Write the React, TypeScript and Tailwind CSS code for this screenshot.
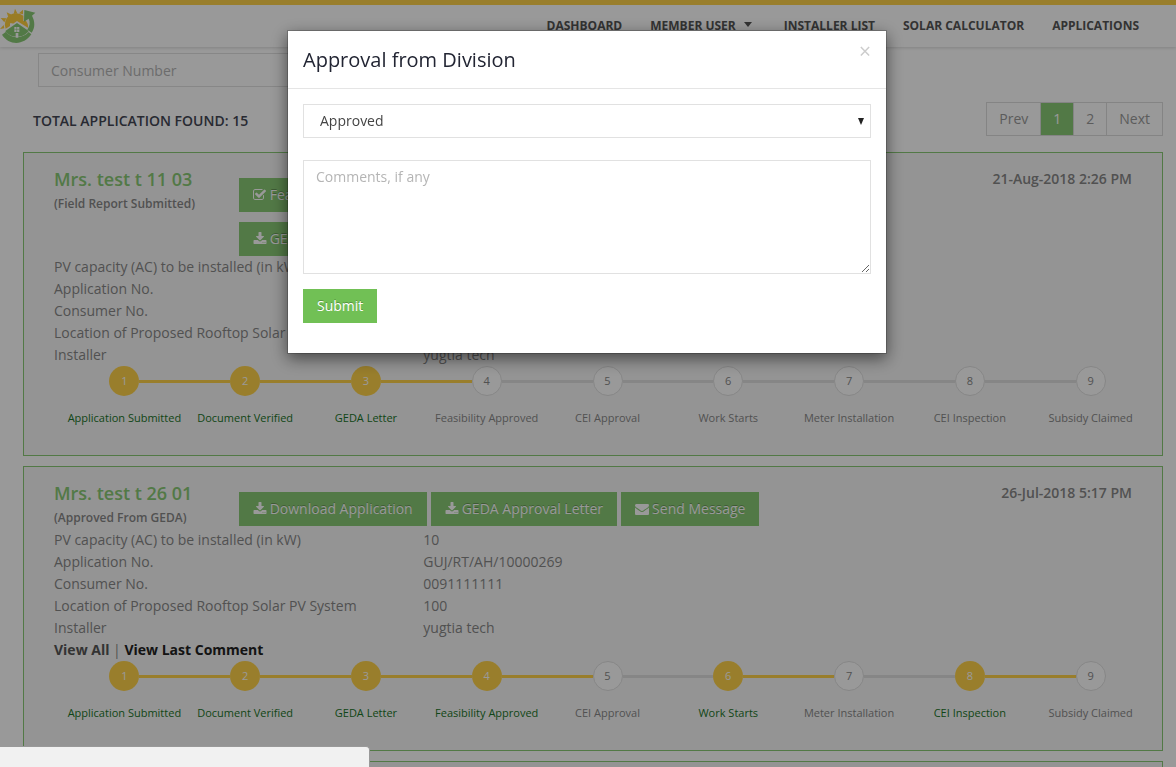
import React from "react";

type IconName = "check" | "download" | "mail";

type Application = {
  name: string;
  status: string;
  date: string;
  actions: { icon: IconName; label: string }[][];
  values: string[];
  comments?: boolean;
  done: number[];
};

const FIELDS = [
  "PV capacity (AC) to be installed (in kW)",
  "Application No.",
  "Consumer No.",
  "Location of Proposed Rooftop Solar PV System",
  "Installer",
];

const STEPS = [
  "Application Submitted",
  "Document Verified",
  "GEDA Letter",
  "Feasibility Approved",
  "CEI Approval",
  "Work Starts",
  "Meter Installation",
  "CEI Inspection",
  "Subsidy Claimed",
];

const APPLICATIONS: Application[] = [
  {
    name: "Mrs. test t 11 03",
    status: "(Field Report Submitted)",
    date: "21-Aug-2018 2:26 PM",
    actions: [
      [{ icon: "check", label: "Feasibility" }],
      [{ icon: "download", label: "GEDA Approval Letter" }],
    ],
    values: ["", "", "", "", "yugtia tech"],
    done: [1, 2, 3],
  },
  {
    name: "Mrs. test t 26 01",
    status: "(Approved From GEDA)",
    date: "26-Jul-2018 5:17 PM",
    actions: [
      [
        { icon: "download", label: "Download Application" },
        { icon: "download", label: "GEDA Approval Letter" },
        { icon: "mail", label: "Send Message" },
      ],
    ],
    values: ["10", "GUJ/RT/AH/10000269", "0091111111", "100", "yugtia tech"],
    comments: true,
    done: [1, 2, 3, 4, 6, 8],
  },
];

const ICON_PATHS: Record<IconName, string> = {
  check:
    "M1408 930v318q0 119-84.5 203.5t-203.5 84.5h-832q-119 0-203.5-84.5t-84.5-203.5v-832q0-119 84.5-203.5t203.5-84.5h832q63 0 117 25 15 7 18 23 3 17-9 29l-49 49q-10 10-23 10-3 0-9-2-23-6-45-6h-832q-66 0-113 47t-47 113v832q0 66 47 113t113 47h832q66 0 113-47t47-113v-254q0-13 9-22l64-64q10-10 23-10 6 0 12 3 20 8 20 29zm231-489l-814 814q-24 24-57 24t-57-24l-430-430q-24-24-24-57t24-57l110-110q24-24 57-24t57 24l263 263 647-647q24-24 57-24t57 24l110 110q24 24 24 57t-24 57z",
  download:
    "M1344 1344q0-26-19-45t-45-19-45 19-19 45 19 45 45 19 45-19 19-45zm256 0q0-26-19-45t-45-19-45 19-19 45 19 45 45 19 45-19 19-45zm128-224v320q0 40-28 68t-68 28h-1472q-40 0-68-28t-28-68v-320q0-40 28-68t68-28h465l135 136q58 56 136 56t136-56l136-136h464q40 0 68 28t28 68zm-325-569q17 41-14 70l-448 448q-18 19-45 19t-45-19l-448-448q-31-29-14-70 17-39 59-39h256v-448q0-26 19-45t45-19h256q26 0 45 19t19 45v448h256q42 0 59 39z",
  mail:
    "M1792 710v794q0 66-47 113t-113 47h-1472q-66 0-113-47t-47-113v-794q44 49 101 87 362 246 497 345 57 42 92.5 65.5t94.5 48 110 24.5h2q51 0 110-24.5t94.5-48 92.5-65.5q170-123 498-345 57-39 100-87zm0-294q0 79-49 151t-122 123q-376 261-468 325-10 7-42.5 31t-54 38.5-52 32.5-57.5 27-50 9h-2q-23 0-50-9t-57.5-27-52-32.5-54-38.5-42.5-31q-91-64-262-182.5t-205-142.5q-62-42-117-115.5t-55-136.5q0-78 41.5-130t118.5-52h1472q65 0 112.5 47t47.5 113z",
};

function Icon({ name }: { name: IconName }) {
  return (
    <svg viewBox="0 0 1792 1792" className="size-[14px] fill-current" aria-hidden="true">
      <path d={ICON_PATHS[name]} />
    </svg>
  );
}

function Logo() {
  return (
    <svg viewBox="0 24 108 108" className="size-9" role="img" aria-label="Solar rooftop">
      <g fill="#ffcf3f">
        <path d="M17 86a34 34 0 0 1 53-39v16l8-1q7 9 7 22L51 63 38 72v-2h-8v8z" />
        <path d="M0 87l11-12 2 10zM2 54l17 1-6 12zM20 37l15 7-10 8zM41 42l4-16 7 14zM57 40l12-11v14z" />
      </g>
      <g fill="#89ca75">
        <path d="M73 30l33 8-10 9c9 17 10 36-1 51l-13-9c8-11 9-23 4-33l-14 9z" />
        <path d="M51 69l35 24c-9 12-20 17-35 17s-27-5-35-17z" />
        <path d="M18 95c13 20 50 23 68 1l8 7C71 137 27 137 6 104z" />
      </g>
      <path d="M43 81h15v15H43zM47 99h8v14h-8z" fill="#fff" />
      <path d="M50 81v15M43 88h15" stroke="#89ca75" strokeWidth="1.5" />
    </svg>
  );
}

function Header() {
  const link = "flex items-center text-[#555]";
  return (
    <header className="flex h-[47px] items-center justify-between border-t-5 border-[#ffd34a] bg-white pr-[37px] shadow-[0_1px_3px_rgba(0,0,0,0.15)]">
      <a href="#home">
        <Logo />
      </a>
      <nav className="flex gap-7 text-xs font-bold">
        <a href="#dashboard" className={link}>DASHBOARD</a>
        <a href="#member" className={link}>
          MEMBER USER
          <svg viewBox="0 0 8 5" className="mr-1 mb-1 ml-2 h-[5px] w-2 fill-current" aria-hidden="true">
            <path d="M0 0h8L4 5z" />
          </svg>
        </a>
        <a href="#installers" className={link}>INSTALLER LIST</a>
        <a href="#calculator" className={link}>SOLAR CALCULATOR</a>
        <a href="#applications" className={link}>APPLICATIONS</a>
      </nav>
    </header>
  );
}

function Pagination() {
  const item = "h-[34px] border-y border-r border-[#ddd] px-3";
  return (
    <nav aria-label="Pages" className="flex text-[#999]">
      <button className={item + " border-l"}>Prev</button>
      <button aria-current="page" className="h-[34px] border-y border-r border-[#ddd] bg-[#89ca75] px-3 text-white">1</button>
      <button className={item}>2</button>
      <button className={item}>Next</button>
    </nav>
  );
}

function Progress({ done }: { done: number[] }) {
  const isDone = (n: number) => done.includes(n);
  const line = (n: number) =>
    n < 1 || n >= STEPS.length ? "bg-transparent" : isDone(n) ? "bg-[#ffd34a]" : "bg-[#e0e0e0]";
  return (
    <ol className="grid grid-cols-9 pr-[11px] pl-10 text-[11px]">
      {STEPS.map((label, i) => {
        const n = i + 1;
        return (
          <li key={label} className="flex flex-col gap-[13px]">
            <div className="flex items-center">
              <span className={"h-[3px] flex-1 " + line(n - 1)} />
              <span
                className={
                  "flex size-[30px] items-center justify-center rounded-full " +
                  (isDone(n) ? "bg-[#ffd34a] text-white" : "border border-[#e0e0e0] bg-white text-[#888]")
                }
              >
                {n}
              </span>
              <span className={"h-[3px] flex-1 " + line(n)} />
            </div>
            <span className={"text-center leading-[17px] whitespace-nowrap " + (isDone(n) ? "text-[#1a7528]" : "text-[#888]")}>
              {label}
            </span>
          </li>
        );
      })}
    </ol>
  );
}

function Card({ app }: { app: Application }) {
  return (
    <article className="border border-[#89ca75] bg-[#f7f7f7] pt-[15px] pb-[29px]">
      <div className="grid grid-cols-12 px-[15px]">
        <div className="col-span-2 flex flex-col gap-[2px] px-[15px] whitespace-nowrap">
          <h2 className="text-lg leading-[23px] font-semibold text-[#89ca75]">{app.name}</h2>
          <p className="text-xs leading-[22px] font-semibold text-[#888]">{app.status}</p>
        </div>
        <div className="col-span-8 flex h-fit flex-col gap-[10px] px-[15px] pt-[10px]">
          {app.actions.map((row, i) => (
            <div key={i} className="flex h-[34px] gap-1">
              {row.map(({ icon, label }) => (
                <button
                  key={label}
                  className="flex items-center gap-[3px] bg-[#89ca75] px-[14px] whitespace-nowrap text-white text-shadow-[0_-1px_0_rgba(0,0,0,0.25)]"
                >
                  <Icon name={icon} />
                  {label}
                </button>
              ))}
            </div>
          ))}
        </div>
        <time className="col-span-2 flex justify-end px-[15px] leading-[22px] font-semibold whitespace-nowrap text-[#888]">
          {app.date}
        </time>
      </div>
      <dl className="px-[15px] leading-[22px]">
        {FIELDS.map((field, i) => (
          <div key={field} className="grid grid-cols-12">
            <dt className="col-span-4 px-[15px] whitespace-nowrap">{field}</dt>
            <dd className="col-span-8 px-[15px]">{app.values[i]}</dd>
          </div>
        ))}
      </dl>
      {app.comments && (
        <p className="px-[30px] leading-[22px]">
          <a href="#comments" className="font-bold text-[#555]">View All</a>
          {" | "}
          <a href="#last-comment" className="font-bold text-[#222]">View Last Comment</a>
        </p>
      )}
      <Progress done={app.done} />
    </article>
  );
}

function ApprovalDialog() {
  return (
    <div className="fixed inset-0 flex items-start justify-center bg-black/40 pt-[30px] pr-[2px]">
      <div
        role="dialog"
        aria-modal="true"
        aria-labelledby="dialog-title"
        className="w-[600px] border border-black/20 bg-white bg-clip-padding shadow-[0_5px_15px_rgba(0,0,0,0.5)]"
      >
        <div className="flex items-start justify-between border-b border-[#e5e5e5] p-[15px]">
          <h1 id="dialog-title" className="text-xl leading-[27px] text-[#222533]">Approval from Division</h1>
          <button aria-label="Close" className="text-[21px] leading-[10px] text-[#ccc]">×</button>
        </div>
        <form className="flex flex-col items-start p-[15px] pb-[30px]" onSubmit={(e) => e.preventDefault()}>
          <div className="relative mb-[22px] w-full">
            <select
              aria-label="Decision"
              className="block h-[34px] w-full appearance-none rounded-none border border-[#e1e1e1] bg-white px-4 text-[#444]"
            >
              <option>Approved</option>
              <option>Rejected</option>
            </select>
            <svg viewBox="0 0 6 7" className="pointer-events-none absolute top-[14px] right-[7px] h-[7px] w-[6px] fill-[#222]">
              <path d="M0 0h6L3 7z" />
            </svg>
          </div>
          <textarea
            aria-label="Comments"
            placeholder="Comments, if any"
            className="mb-[15px] block h-[114px] w-full border border-[#e1e1e1] px-3 py-[6px] leading-5 placeholder:text-[#b5b5b5]"
          />
          <button type="submit" className="h-[34px] bg-[#71c055] px-[14px] text-white text-shadow-[0_-1px_0_rgba(0,0,0,0.25)]">
            Submit
          </button>
        </form>
      </div>
    </div>
  );
}

export default function App() {
  return (
    <div className="h-screen overflow-hidden bg-white font-['Open_Sans',sans-serif] text-sm text-[#888]">
      <Header />
      <main className="pr-[13px] pl-[23px]">
        <div className="px-[15px] pt-[6px]">
          <input
            aria-label="Consumer Number"
            placeholder="Consumer Number"
            className="block h-[34px] w-1/3 border border-[#e1e1e1] px-3 placeholder:text-[#b5b5b5]"
          />
        </div>
        <div className="flex items-center justify-between pt-[15px] pb-4 pl-[10px]">
          <h3 className="pt-1 font-semibold text-[#444754]">TOTAL APPLICATION FOUND: 15</h3>
          <Pagination />
        </div>
        <div className="flex flex-col gap-[10px]">
          {APPLICATIONS.map((app) => (
            <Card key={app.name} app={app} />
          ))}
          <article className="h-72 border border-[#89ca75] bg-[#f7f7f7]" />
        </div>
      </main>
      <ApprovalDialog />
      <div className="fixed bottom-0 left-0 h-[21px] w-[370px] rounded-tr border-t border-r border-[#999] bg-[#f1f1f1]" />
    </div>
  );
}
